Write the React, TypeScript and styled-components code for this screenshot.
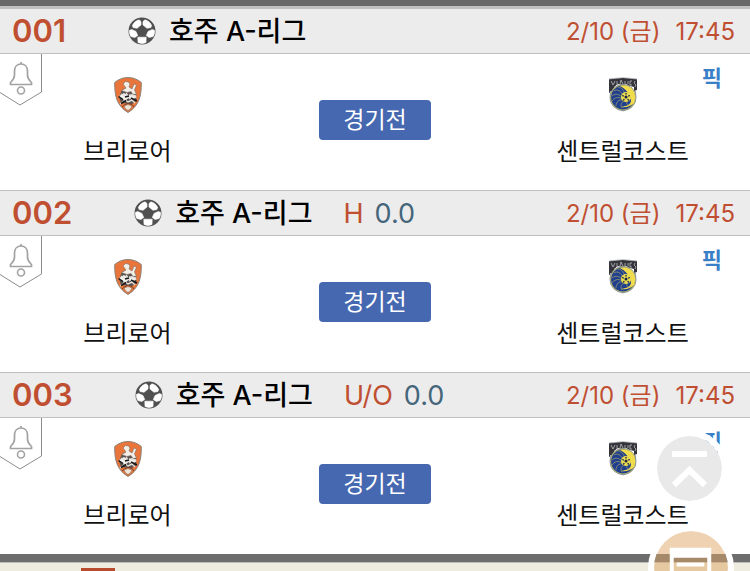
import React from "react";
import styled, { createGlobalStyle } from "styled-components";

const GlobalStyle = createGlobalStyle`
  * { box-sizing: border-box; }
  body {
    margin: 0;
    background: #ffffff;
    color: #111111;
    font-family: Inter, "Noto Sans CJK KR", sans-serif;
    overflow: hidden;
  }
`;

const TopBar = styled.div`
  height: 8px;
  background: #696969;
  border-bottom: 2px solid #c0c0c0;
`;

const MatchCard = styled.article`
  border-top: 1px solid #c0c0c0;
`;

const MatchHeader = styled.header`
  display: flex;
  align-items: center;
  height: 45px;
  padding: 0 15px 0 12px;
  background: #ececec;
  border-bottom: 1px solid #c0c0c0;
  white-space: nowrap;
`;

const MatchNumber = styled.span`
  margin-right: 62px;
  color: #c04f32;
  font-size: 31px;
  line-height: 44px;
  font-weight: 600;
`;

const BallIcon = styled.svg`
  width: 28px;
  height: 28px;
  flex: none;
`;

const League = styled.h2`
  margin: 0 0 0 13px;
  padding-top: 2px;
  color: #000000;
  font-size: 27px;
  line-height: 44px;
  font-weight: 500;
`;

const BetType = styled.span`
  margin-left: 31px;
  padding-top: 2px;
  color: #c04f32;
  font-size: 27px;
  line-height: 44px;
`;

const BetLine = styled.span`
  margin-left: 11px;
  padding-top: 2px;
  color: #44657a;
  font-size: 27px;
  line-height: 44px;
`;

const Kickoff = styled.time`
  display: flex;
  gap: 15px;
  margin-left: auto;
  padding-top: 2px;
  color: #c04f32;
  font-size: 24px;
  line-height: 44px;
`;

const MatchBody = styled.div`
  position: relative;
  display: grid;
  grid-template-columns: 34fr 32fr 34fr;
  height: 136px;
`;

const AlarmButton = styled.button`
  position: absolute;
  top: 0;
  left: 0;
  width: 42px;
  height: 52px;
  padding: 0;
  border: 0;
  background: none;
  svg { display: block; }
`;

const PickLink = styled.a`
  position: absolute;
  top: 8px;
  right: 28px;
  color: #3a80c8;
  font-size: 22px;
  line-height: 32px;
  font-weight: 600;
  text-decoration: none;
`;

const Team = styled.div`
  display: flex;
  flex-direction: column;
  align-items: center;
  padding-top: 22px;
  svg { display: block; width: 30px; height: 38px; }
`;

const TeamName = styled.span`
  margin-top: 20px;
  font-size: 24px;
  line-height: 36px;
  white-space: nowrap;
`;

const StatusButton = styled.button`
  justify-self: center;
  width: 112px;
  height: 40px;
  margin-top: 46px;
  padding: 0;
  border: 0;
  border-radius: 4px;
  background: #4668b0;
  color: #ffffff;
  font-family: inherit;
  font-size: 23px;
  line-height: 40px;
`;

const Footer = styled.footer`
  height: 40px;
  padding-left: 81px;
  border-top: 8px solid #6d6d6d;
  background: #eeecdf;
`;

const FooterRule = styled.div`
  height: 1px;
  margin: 0 0 5px -81px;
  background: #bdbdbd;
`;

const FooterTab = styled.div`
  width: 34px;
  height: 26px;
  background: #b84a2e;
`;

const FloatingButton = styled.button<{ $size: number; $right: number; $bottom: number; $fill: string }>`
  position: fixed;
  right: ${(p) => p.$right}px;
  bottom: ${(p) => p.$bottom}px;
  width: ${(p) => p.$size}px;
  height: ${(p) => p.$size}px;
  padding: 0;
  border: 6px solid #ffffff;
  border-radius: 50%;
  background: ${(p) => p.$fill} padding-box;
  svg { display: block; width: 100%; height: 100%; }
`;

function SoccerBall() {
  return (
    <BallIcon viewBox="0 0 28 28" aria-hidden="true">
      <circle cx="14" cy="14" r="13.5" fill="#505050" />
      <g fill="#ffffff" stroke="#ffffff" strokeWidth="0.6" strokeLinejoin="round">
        <path d="M4.500 8.200Q6.500 4 11 2.800L13 4.500 13 8 9 11.300 5 10.500Z" />
        <path d="M23.500 8.200Q21.500 4 17 2.800L15 4.500 15 8 19 11.300 23 10.500Z" />
        <path d="M1.300 13.500 3.700 12.500 8 14.500 9.700 18.500 6.800 20.500 2.800 19.500Q1.200 16.500 1.300 13.500Z" />
        <path d="M26.700 13.500 24.300 12.500 20 14.500 18.300 18.500 21.200 20.500 25.200 19.500Q26.800 16.500 26.700 13.500Z" />
        <path d="M9.800 20.200H18.200L18 25.500Q14 27.700 10 25.500Z" />
      </g>
    </BallIcon>
  );
}

function AlarmIcon() {
  return (
    <svg width="42" height="52" viewBox="0 0 42 52" fill="none" aria-hidden="true">
      <path d="M41.5 0V38L20 51 0 38.5" stroke="#8c8c8c" />
      <path d="M21 8v2M21 10c-4 0-6.500 3-6.500 7v4c0 4-1.500 5-4 7.500v2h21v-2c-2.500-2.500-4-3.500-4-7.500v-4c0-4-2.500-7-6.500-7Z" stroke="#a2a2a2" strokeWidth="1.700" />
      <circle cx="21" cy="36.500" r="3.500" stroke="#a2a2a2" strokeWidth="1.600" />
    </svg>
  );
}

function RoarCrest() {
  return (
    <svg viewBox="0 0 30 38" aria-hidden="true">
      <path d="M15 1.500C10 1.500 5 3.500 1.700 6.500 1.500 20 4 30 15 36.500 26 30 28.500 20 28.300 6.500 25 3.500 20 1.500 15 1.500Z" fill="#e9753b" stroke="#8b8178" />
      <path d="M9 14 14 11.500 23 16 23.500 25 19 28 8 27 6 21Z" fill="#5a534f" />
      <path d="M10 8 12.500 5.500 15.500 6 17 8 16 11 19 13 21 8 23.500 9 21.500 14 23.500 18 20 18.500 18 15.500 14 16.500 8.500 14.500 13 12Z" fill="#f4eee8" stroke="#796b60" strokeWidth=".6" />
      <path d="M6 20 11 17 15 20 19 18 24 21 19 24 16 21.500 12 25Z" fill="#f1f1ee" />
      <path d="M7 28 12 24 15 26 19 24 22 27M8 18l5 3M13 17l4 6M16 19l7 1" stroke="#e5e2dd" strokeWidth="1.400" fill="none" />
      <path d="M5.500 20.500l4.500 3M18 22l6 3M8 27.500l5-3M12 21l4-1" stroke="#171717" strokeWidth="1.500" />
      <path d="M9 31 12 28.500 15 27.500 19 28.500 21 31" stroke="#773f29" fill="none" />
      <path d="M11 30 15 28.500 19 30 17.500 33 15 34.500 12.500 33Z" fill="#eee5d9" stroke="#9b6f52" strokeWidth=".7" />
    </svg>
  );
}

function MarinersCrest() {
  return (
    <svg viewBox="0 0 30 38" aria-hidden="true">
      <path d="M1 3Q15 1 29 3V14L26 15V11L22 10 18 8 14 9 10 8 6 11V15L1 17Z" fill="#34343a" />
      <path d="M1 3Q15 0 29 3M3 5l2 4 2-4M9 5v4M12 8l1-4 2 4M17 5v4M20 5v3M24 5h-2v4h2M27 5l-1 2 2 2-1 2" stroke="#b9bec2" strokeWidth=".8" fill="none" />
      <path d="M2 15Q0 30 15 35.500 30 30 28 15" fill="#a1aab4" />
      <circle cx="15" cy="21.500" r="13" fill="#d8ca48" stroke="#8a949d" />
      <circle cx="15" cy="21.500" r="11.900" fill="#203f8e" />
      <path d="M12 10C24 7 30 18 26 27 22 31 17 32 13 31 20 30 23 28 23 24 21 17 18 13 12 10Z" fill="#f1dc4d" />
      <g fill="none" stroke="#a9a565" strokeWidth=".7">
        <path d="M17 19C16 14 13 11 10 11M15 20C13 14 9 13 6 15M14 21C10 17 6 18 4 20M14 23C10 20 6 22 4 25M15 24C11 23 8 26 8 30M17 25C13 26 12 29 14 32M19 25C18 28 20 30 23 29" />
      </g>
      <circle cx="18" cy="21" r="5" fill="#eadb50" />
      <circle cx="18" cy="21" r="1.500" fill="#182448" />
      <path d="M18 17v1.600M21.800 19.500l-1.600.6M20.700 24.500l-1-1.300M15.300 24.500l1-1.300M14.200 19.500l1.600.6" stroke="#182448" strokeWidth="1.300" />
    </svg>
  );
}

type Match = { number: string; bet?: string; line?: string };

const matches: Match[] = [
  { number: "001" },
  { number: "002", bet: "H", line: "0.0" },
  { number: "003", bet: "U/O", line: "0.0" },
];

function MatchRow({ match }: { match: Match }) {
  return (
    <MatchCard>
      <MatchHeader>
        <MatchNumber>{match.number}</MatchNumber>
        <SoccerBall />
        <League>호주 A-리그</League>
        {match.bet && <BetType>{match.bet}</BetType>}
        {match.line && <BetLine>{match.line}</BetLine>}
        <Kickoff>
          <span>2/10 (금)</span>
          <span>17:45</span>
        </Kickoff>
      </MatchHeader>
      <MatchBody>
        <AlarmButton type="button" aria-label="알림"><AlarmIcon /></AlarmButton>
        <Team><RoarCrest /><TeamName>브리로어</TeamName></Team>
        <StatusButton type="button">경기전</StatusButton>
        <Team><MarinersCrest /><TeamName>센트럴코스트</TeamName></Team>
        <PickLink href="#pick">픽</PickLink>
      </MatchBody>
    </MatchCard>
  );
}

export default function App() {
  return (
    <>
      <GlobalStyle />
      <TopBar />
      <main>
        {matches.map((match) => <MatchRow key={match.number} match={match} />)}
      </main>
      <Footer><FooterRule /><FooterTab /></Footer>
      <FloatingButton type="button" aria-label="맨 위로" $size={77} $right={22} $bottom={64} $fill="#e9e9e9">
        <svg viewBox="0 0 65 65" fill="none" stroke="#ffffff" strokeWidth="6" aria-hidden="true">
          <path d="M15 18H50M17 49 32.500 34 48 49" />
        </svg>
      </FloatingButton>
      <FloatingButton type="button" aria-label="목록" $size={86} $right={16} $bottom={-40} $fill="rgba(223, 166, 100, 0.5)">
        <svg viewBox="0 0 75 75" fill="#ffffff" aria-hidden="true">
          <path fillRule="evenodd" d="M16 17H58V62H16ZM20 27V58H54V27Z" />
          <path d="M23 32H51V36H23Z" />
        </svg>
      </FloatingButton>
    </>
  );
}
